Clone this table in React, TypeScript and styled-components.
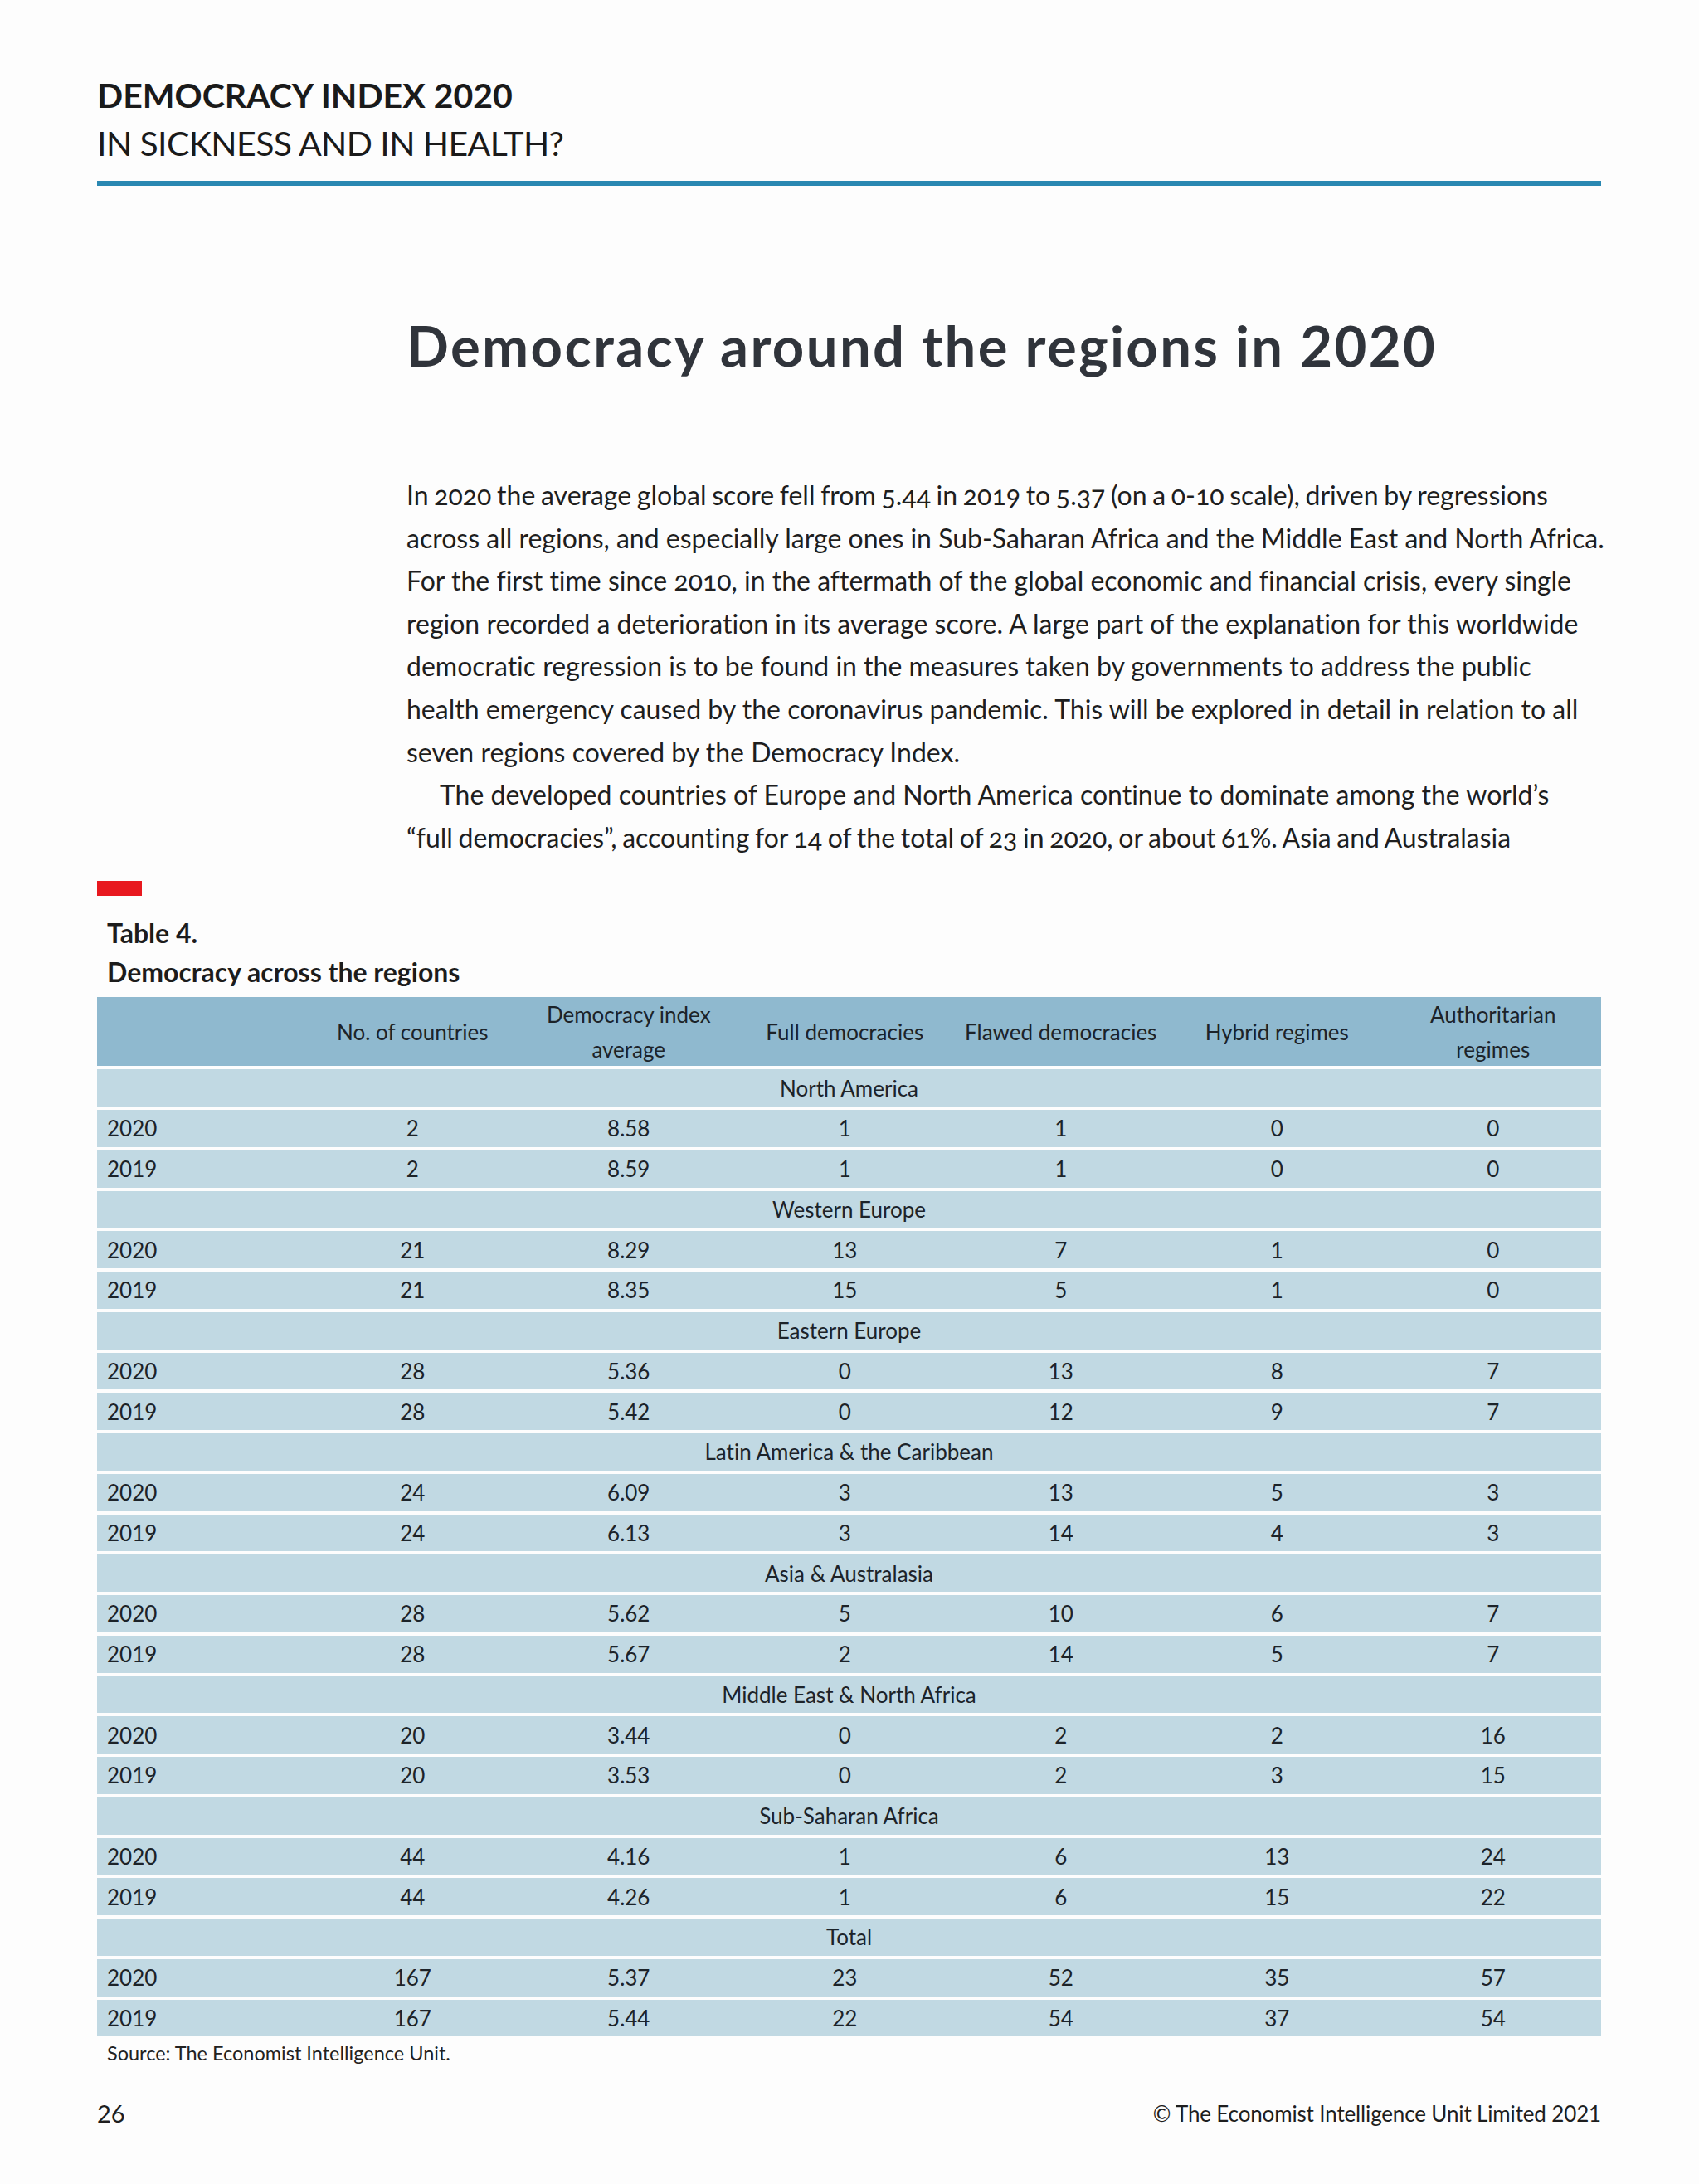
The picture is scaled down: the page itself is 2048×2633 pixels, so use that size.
import React from "react";
import styled, { createGlobalStyle } from "styled-components";

const GlobalStyle = createGlobalStyle`
  html, body { margin: 0; padding: 0; background: #fdfdfd; }
  body { font-family: Lato, "Noto Sans", sans-serif; color: #1e1e1e; font-variant-ligatures: none; }
`;

const Page = styled.div`
  width: 2048px;
  box-sizing: border-box;
  padding: 86px 118px 60px 117px;
`;

const RunningHead = styled.header`
  display: flex;
  flex-direction: column;
`;

const HeadLine = styled.div<{ $bold?: boolean }>`
  font-family: Lato, sans-serif;
  font-size: 41px;
  line-height: 58px;
  font-weight: ${(p) => (p.$bold ? 700 : 400)};
  letter-spacing: ${(p) => (p.$bold ? "0" : "-0.6px")};
  color: #1a1a1a;
  text-transform: uppercase;
  white-space: nowrap;
`;

const Rule = styled.div`
  height: 6px;
  background: #2a88b2;
  margin-top: 16px;
`;

const Main = styled.section`
  margin-left: 373px;
  margin-top: 152px;
  display: flex;
  flex-direction: column;
`;

const Title = styled.h1`
  margin: 0;
  font-family: Lato, sans-serif;
  font-weight: 700;
  font-size: 67px;
  line-height: 80px;
  letter-spacing: 2.4px;
  color: #30343b;
  white-space: nowrap;
`;

const Body = styled.p`
  margin: 115px 0 0 0;
  font-family: Lato, sans-serif;
  font-size: 32px;
  line-height: 51.6px;
  color: #1e1e1e;
  letter-spacing: 0;
  font-variant-numeric: oldstyle-nums;
`;

const Line = styled.span<{ $indent?: boolean; $tight?: boolean }>`
  display: block;
  white-space: nowrap;
  padding-left: ${(p) => (p.$indent ? "40px" : "0")};
  word-spacing: ${(p) => (p.$tight ? "-1.5px" : "0")};
`;

const RedMark = styled.div`
  width: 54px;
  height: 18px;
  background: #e8191f;
  margin-top: 27px;
`;

const Caption = styled.div`
  margin-top: 21px;
  padding-left: 12px;
  font-family: Lato, sans-serif;
  font-weight: 700;
  font-size: 32px;
  line-height: 47px;
  color: #1c1c1c;
`;

const Table = styled.div`
  margin-top: 7px;
  display: flex;
  flex-direction: column;
  font-family: Lato, sans-serif;
  font-size: 26px;
  color: #1c2329;
`;

const Grid = styled.div`
  display: grid;
  grid-template-columns: 250px repeat(6, 1fr);
  align-items: center;
`;

const HeaderRow = styled(Grid)`
  height: 83px;
  background: #8fb9cf;
`;

const HeadCell = styled.div`
  text-align: center;
  line-height: 42px;
`;

const DataRow = styled(Grid)`
  height: 44.75px;
  margin-top: 4px;
  background: #c1d9e3;
`;

const RegionRow = styled.div`
  height: 44.75px;
  margin-top: 4px;
  background: #c1d9e3;
  display: flex;
  align-items: center;
  justify-content: center;
`;

const Cell = styled.div<{ $first?: boolean }>`
  text-align: ${(p) => (p.$first ? "left" : "center")};
  padding-left: ${(p) => (p.$first ? "12px" : "0")};
`;

const Source = styled.div`
  margin-top: 5px;
  padding-left: 12px;
  font-family: Lato, sans-serif;
  font-size: 23.5px;
  line-height: 30px;
  color: #222;
`;

const Footer = styled.footer`
  margin-top: 38px;
  display: flex;
  justify-content: space-between;
  align-items: center;
  font-family: Lato, sans-serif;
  line-height: 40px;
  color: #1e1e1e;
`;

const PageNum = styled.span`
  font-size: 29px;
`;

const Copyright = styled.span`
  font-size: 26px;
  letter-spacing: -0.15px;
`;

type Region = { name: string; rows: [string, string[]][] };

const regions: Region[] = [
  { name: "North America", rows: [["2020", ["2", "8.58", "1", "1", "0", "0"]], ["2019", ["2", "8.59", "1", "1", "0", "0"]]] },
  { name: "Western Europe", rows: [["2020", ["21", "8.29", "13", "7", "1", "0"]], ["2019", ["21", "8.35", "15", "5", "1", "0"]]] },
  { name: "Eastern Europe", rows: [["2020", ["28", "5.36", "0", "13", "8", "7"]], ["2019", ["28", "5.42", "0", "12", "9", "7"]]] },
  { name: "Latin America & the Caribbean", rows: [["2020", ["24", "6.09", "3", "13", "5", "3"]], ["2019", ["24", "6.13", "3", "14", "4", "3"]]] },
  { name: "Asia & Australasia", rows: [["2020", ["28", "5.62", "5", "10", "6", "7"]], ["2019", ["28", "5.67", "2", "14", "5", "7"]]] },
  { name: "Middle East & North Africa", rows: [["2020", ["20", "3.44", "0", "2", "2", "16"]], ["2019", ["20", "3.53", "0", "2", "3", "15"]]] },
  { name: "Sub-Saharan Africa", rows: [["2020", ["44", "4.16", "1", "6", "13", "24"]], ["2019", ["44", "4.26", "1", "6", "15", "22"]]] },
  { name: "Total", rows: [["2020", ["167", "5.37", "23", "52", "35", "57"]], ["2019", ["167", "5.44", "22", "54", "37", "54"]]] },
];

const headers: string[][] = [
  ["No. of countries"],
  ["Democracy index", "average"],
  ["Full democracies"],
  ["Flawed democracies"],
  ["Hybrid regimes"],
  ["Authoritarian", "regimes"],
];

const paragraph: { text: string; indent?: boolean; tight?: boolean }[] = [
  { text: "In 2020 the average global score fell from 5.44 in 2019 to 5.37 (on a 0-10 scale), driven by regressions", tight: true },
  { text: "across all regions, and especially large ones in Sub-Saharan Africa and the Middle East and North Africa." },
  { text: "For the first time since 2010, in the aftermath of the global economic and financial crisis, every single" },
  { text: "region recorded a deterioration in its average score. A large part of the explanation for this worldwide" },
  { text: "democratic regression is to be found in the measures taken by governments to address the public" },
  { text: "health emergency caused by the coronavirus pandemic. This will be explored in detail in relation to all" },
  { text: "seven regions covered by the Democracy Index." },
  { text: "The developed countries of Europe and North America continue to dominate among the world’s", indent: true },
  { text: "“full democracies”, accounting for 14 of the total of 23 in 2020, or about 61%. Asia and Australasia", tight: true },
];

export default function App() {
  return (
    <>
      <GlobalStyle />
      <Page>
        <RunningHead>
          <HeadLine $bold>Democracy Index 2020</HeadLine>
          <HeadLine>In sickness and in health?</HeadLine>
          <Rule />
        </RunningHead>
        <Main>
          <Title>Democracy around the regions in 2020</Title>
          <Body>
            {paragraph.map((l, i) => (
              <Line key={i} $indent={l.indent} $tight={l.tight}>
                {l.text}
              </Line>
            ))}
          </Body>
        </Main>
        <RedMark />
        <Caption>
          Table 4.
          <br />
          Democracy across the regions
        </Caption>
        <Table>
          <HeaderRow>
            <HeadCell />
            {headers.map((h, i) => (
              <HeadCell key={i}>
                {h.map((t, j) => (
                  <div key={j}>{t}</div>
                ))}
              </HeadCell>
            ))}
          </HeaderRow>
          {regions.map((r) => (
            <React.Fragment key={r.name}>
              <RegionRow>{r.name}</RegionRow>
              {r.rows.map(([year, vals]) => (
                <DataRow key={year}>
                  <Cell $first>{year}</Cell>
                  {vals.map((v, k) => (
                    <Cell key={k}>{v}</Cell>
                  ))}
                </DataRow>
              ))}
            </React.Fragment>
          ))}
        </Table>
        <Source>Source: The Economist Intelligence Unit.</Source>
        <Footer>
          <PageNum>26</PageNum>
          <Copyright>© The Economist Intelligence Unit Limited 2021</Copyright>
        </Footer>
      </Page>
    </>
  );
}
